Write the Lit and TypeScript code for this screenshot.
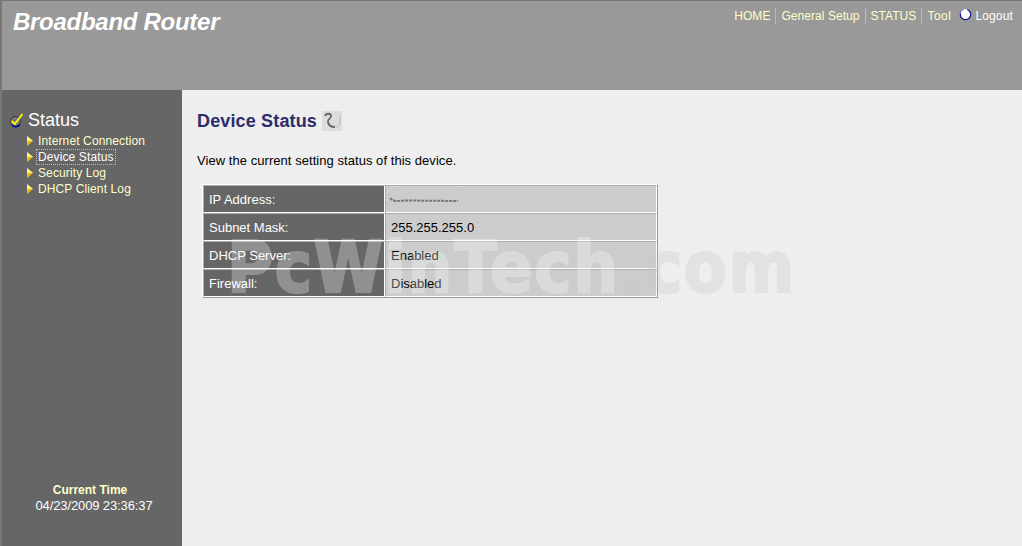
import { LitElement, html, css } from "lit";
import { customElement } from "lit/decorators.js";

const rows: [string, string][] = [
  ["IP Address:", ""],
  ["Subnet Mask:", "255.255.255.0"],
  ["DHCP Server:", "Enabled"],
  ["Firewall:", "Disabled"],
];
const links = ["Internet Connection", "Device Status", "Security Log", "DHCP Client Log"];

@customElement("app-root")
export class AppRoot extends LitElement {
  static styles = css`
    :host { display: block; width: 1022px; height: 546px; position: relative; overflow: hidden;
      font-family: "Liberation Sans", Arial, sans-serif; font-size: 12px; background: #eee; }
    .header { height: 90px; box-sizing: border-box; background: #999; border-top: 1px solid #777; border-left: 2px solid #777;
      display: flex; justify-content: space-between; align-items: flex-start; }
    .brand { font-size: 24px; font-weight: bold; font-style: italic; color: #fff; margin: 7px 0 0 11px; line-height: 27px; letter-spacing: -0.28px; }
    .nav { display: flex; align-items: center; margin: 7px 9px 0 0; color: #ffc; line-height: 16px; letter-spacing: 0.05px; }
    .nav .item { padding: 0 5px; border-right: 1px solid #bbb; }
    .nav .item.last { border-right: 0; padding-right: 6px; letter-spacing: 0.5px; }
    .nav svg { margin: -4px 3px 0 2px; display: block; }
    .nav .item.logout { color: #fff; padding: 0; letter-spacing: 0.15px; }
    .body { display: flex; height: 456px; }
    .side { width: 182px; box-sizing: border-box; background: #666; border-left: 2px solid #777; display: flex; flex-direction: column; justify-content: space-between; }
    .status { display: flex; align-items: center; margin: 20px 0 0 7px; color: #fff; font-size: 18px; line-height: 21px; gap: 4px; }
    .status svg { margin: -1px 0 0 0; }
    .side ul { list-style: none; margin: 2px 0 0 25px; padding: 0; }
    .side li { height: 16px; display: flex; align-items: center; color: #ffc; gap: 4px; letter-spacing: 0.12px; }
    .side li span { line-height: 14px; padding: 0 1px; margin-left: -1px; border: 1px dotted transparent; }
    .side li.on span { border-color: #bbb; color: #fff; }
    .clock { text-align: center; color: #fff; line-height: 16px; margin: 0 0 32px -4px; }
    .clock b { display: block; color: #ffc; }
    .clock span { display: block; font-size: 13px; padding-left: 8px; letter-spacing: -0.12px; }
    .main { flex: 1; padding: 20px 0 0 15px; color: #000; font-size: 13px; }
    h1 { display: flex; align-items: center; gap: 5px; margin: 0; font-size: 18px; line-height: 22px; color: #2c2c6c; letter-spacing: 0.15px; }
    .intro { margin: 21px 0 0; line-height: 16px; letter-spacing: 0.05px; }
    table { margin: 15px 0 0 5px; width: 456px; table-layout: fixed; border-collapse: separate; border-spacing: 0;
      border: 1px solid; border-color: #fff #999 #999 #fff; }
    td { height: 25px; padding: 1px 0 0 5px; border: 1px solid; border-color: #aaa #fff #fff #aaa; line-height: 25px; overflow: hidden; }
    .k { width: 175px; background: #666; color: #fff; }
    .v { background: #ccc; color: #000; position: relative; }
    .blur { position: absolute; left: 2px; top: -1px; display: block; }
    .mark { position: absolute; left: 227px; top: 232px; font-family: "DejaVu Sans", Verdana, sans-serif; font-weight: bold; font-size: 63px; line-height: 72px; letter-spacing: 1.5px; white-space: nowrap; pointer-events: none; transform: scaleY(1.12); }
    .mark .a { color: #fff; -webkit-text-stroke: 2px #fff; opacity: .28; }
    .mark .b { color: #c4c4c4; -webkit-text-stroke: 2px #c4c4c4; opacity: .28; }
  `;

  render() {
    return html`
      <div class="header">
        <div class="brand">Broadband Router</div>
        <div class="nav">
          <span class="item">HOME</span><span class="item">General Setup</span><span class="item">STATUS</span><span class="item last">Tool</span>
          <svg width="13" height="13" viewBox="0 0 13 13"><circle cx="6.500" cy="6.500" r="5.200" fill="#fff" stroke="#00008b" stroke-width="1.100"/><path d="M1.800 5.500A5 5 0 0 1 8 1.600" fill="none" stroke="#eee" stroke-width="1.200"/></svg>
          <span class="item last logout">Logout</span>
        </div>
      </div>
      <div class="body">
        <div class="side">
          <div>
            <div class="status">
              <svg width="15" height="15" viewBox="0 0 15 15"><circle cx="6.500" cy="8.500" r="5" fill="#777" stroke="#333" stroke-width="1"/><path d="M2.800 12a5 5 0 0 0 8-.5" fill="none" stroke="#00008b" stroke-width="1.400"/><path d="M2.500 8 5.800 11 13.500 1" fill="none" stroke="#ff0" stroke-width="1.800"/></svg>
              <span>Status</span>
            </div>
            <ul>
              ${links.map((l) => html`<li class=${l === "Device Status" ? "on" : ""}>
                <svg width="6" height="10" viewBox="0 0 6 10"><path d="M0 0 6 5 0 10Z" fill="#eb1"/><path d="M0 0 6 5H0Z" fill="#fe8"/></svg><span>${l}</span></li>`)}
            </ul>
          </div>
          <div class="clock"><b>Current Time</b><span>04/23/2009 23:36:37</span></div>
        </div>
        <div class="main">
          <h1>Device Status
            <svg width="20" height="20" viewBox="0 0 20 20"><rect width="20" height="20" fill="#ddd"/><path d="M3 5C4 2 9 2 9 5 9 8 5 8 6 11 6.500 14 8 16 13 16" fill="none" stroke="#666" stroke-width="1.800"/><path d="M14 16C17 16 18 14 18 5" fill="none" stroke="#bbb" stroke-width="1"/></svg>
          </h1>
          <p class="intro">View the current setting status of this device.</p>
          <table>
            ${rows.map(([k, v], i) => html`<tr><td class="k">${k}</td><td class="v">${i === 0
              ? html`<svg class="blur" width="80" height="26" viewBox="0 0 80 26"><defs><filter id="b" x="-5%" y="-50%" width="110%" height="200%"><feGaussianBlur stdDeviation="0.5"/></filter></defs><path d="M2 1C24 -1 54 -1 78 1" fill="none" stroke="#ddd" stroke-width="2"/><path d="M2 13C6 17 10 16 16 15.500L70 16" fill="none" stroke="#777" stroke-width="2" stroke-dasharray="3 1" filter="url(#b)"/></svg>`
              : v}</td></tr>`)}
          </table>
        </div>
      </div>
      <div class="mark"><span class="a">PcWinTech</span><span class="b">.com</span></div>
    `;
  }
}
